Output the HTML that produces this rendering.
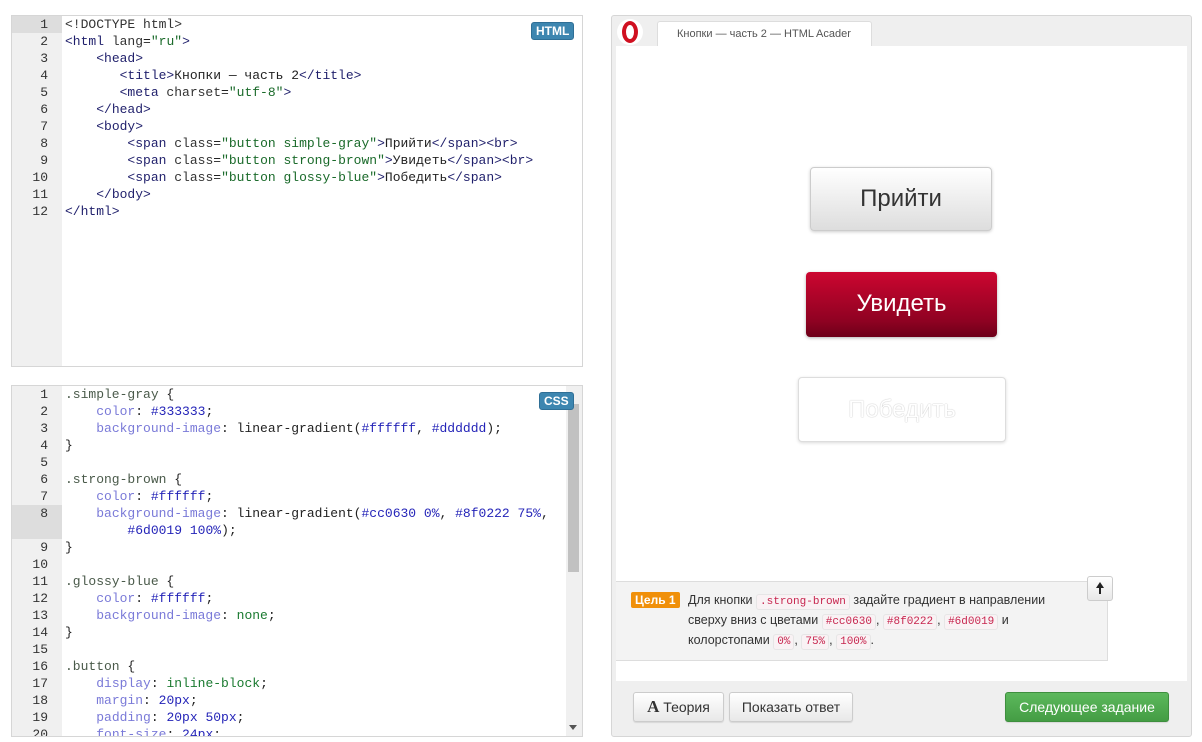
<!DOCTYPE html>
<html><head><meta charset="utf-8"><style>
*{box-sizing:border-box;margin:0;padding:0}
body{width:1202px;height:742px;background:#fff;font-family:"Liberation Sans",sans-serif;position:relative;overflow:hidden}
.panel{position:absolute;border:1px solid #d6d6d6;background:#fff;overflow:hidden}
.gut{position:absolute;left:0;top:0;bottom:0;width:50px;background:#f0f0f0}
.code{position:absolute;left:0;top:0;font-family:"Liberation Mono",monospace;font-size:13px;line-height:17px;white-space:pre;color:#222}
.ln{display:inline-block;width:36px;text-align:right;color:#333;margin-right:17px}
.t{color:#1f1f6b}.s{color:#1a6a2a}.a{color:#333}
.sel{color:#4a5a4a}.p{color:#7a7ad8}.h{color:#2424b8}.k{color:#1a7a30}.n{color:#2424b8}
.badge{position:absolute;background:#3d86b0;color:#fff;font-weight:bold;font-size:12px;padding:1px 4px;border-radius:3px;border:1px solid #2f6f96}
.btn{position:absolute;border-radius:4px;text-align:center;font-size:24px;font-family:"Liberation Sans",sans-serif}
code{font-family:"Liberation Mono",monospace;font-size:11px;color:#c7254e;background:#f9f2f4;border:1px solid #e6e6e6;border-radius:3px;padding:1px 3px}
.fb{position:absolute;top:676px;height:30px;border:1px solid #ccc;border-radius:3px;background:linear-gradient(#fff,#e8e8e8);font-size:14px;color:#333;line-height:28px;text-align:center;box-shadow:0 1px 1px rgba(0,0,0,.1)}
</style></head><body>

<div class="panel" style="left:11px;top:15px;width:572px;height:352px">
<div class="gut"></div>
<div style="position:absolute;left:0;top:0;width:50px;height:17px;background:#ddd"></div>
<div class="code"><span class="ln">1</span><span class="a">&lt;!DOCTYPE html&gt;</span>
<span class="ln">2</span><span class="t">&lt;html </span><span class="a">lang</span>=<span class="s">"ru"</span><span class="t">&gt;</span>
<span class="ln">3</span>    <span class="t">&lt;head&gt;</span>
<span class="ln">4</span>       <span class="t">&lt;title&gt;</span>Кнопки — часть 2<span class="t">&lt;/title&gt;</span>
<span class="ln">5</span>       <span class="t">&lt;meta </span><span class="a">charset</span>=<span class="s">"utf-8"</span><span class="t">&gt;</span>
<span class="ln">6</span>    <span class="t">&lt;/head&gt;</span>
<span class="ln">7</span>    <span class="t">&lt;body&gt;</span>
<span class="ln">8</span>        <span class="t">&lt;span </span><span class="a">class</span>=<span class="s">"button simple-gray"</span><span class="t">&gt;</span>Прийти<span class="t">&lt;/span&gt;&lt;br&gt;</span>
<span class="ln">9</span>        <span class="t">&lt;span </span><span class="a">class</span>=<span class="s">"button strong-brown"</span><span class="t">&gt;</span>Увидеть<span class="t">&lt;/span&gt;&lt;br&gt;</span>
<span class="ln">10</span>        <span class="t">&lt;span </span><span class="a">class</span>=<span class="s">"button glossy-blue"</span><span class="t">&gt;</span>Победить<span class="t">&lt;/span&gt;</span>
<span class="ln">11</span>    <span class="t">&lt;/body&gt;</span>
<span class="ln">12</span><span class="t">&lt;/html&gt;</span></div>
<div class="badge" style="left:519px;top:6px">HTML</div>
</div>

<div class="panel" style="left:11px;top:385px;width:572px;height:352px">
<div class="gut"></div>
<div style="position:absolute;left:0;top:119px;width:50px;height:34px;background:#ddd"></div>
<div class="code"><span class="ln">1</span><span class="sel">.simple-gray</span> {
<span class="ln">2</span>    <span class="p">color</span>: <span class="h">#333333</span>;
<span class="ln">3</span>    <span class="p">background-image</span>: linear-gradient(<span class="h">#ffffff</span>, <span class="h">#dddddd</span>);
<span class="ln">4</span>}
<span class="ln">5</span>
<span class="ln">6</span><span class="sel">.strong-brown</span> {
<span class="ln">7</span>    <span class="p">color</span>: <span class="h">#ffffff</span>;
<span class="ln">8</span>    <span class="p">background-image</span>: linear-gradient(<span class="h">#cc0630</span> <span class="n">0%</span>, <span class="h">#8f0222</span> <span class="n">75%</span>,
<span class="ln"></span>        <span class="h">#6d0019</span> <span class="n">100%</span>);
<span class="ln">9</span>}
<span class="ln">10</span>
<span class="ln">11</span><span class="sel">.glossy-blue</span> {
<span class="ln">12</span>    <span class="p">color</span>: <span class="h">#ffffff</span>;
<span class="ln">13</span>    <span class="p">background-image</span>: <span class="k">none</span>;
<span class="ln">14</span>}
<span class="ln">15</span>
<span class="ln">16</span><span class="sel">.button</span> {
<span class="ln">17</span>    <span class="p">display</span>: <span class="k">inline-block</span>;
<span class="ln">18</span>    <span class="p">margin</span>: <span class="n">20px</span>;
<span class="ln">19</span>    <span class="p">padding</span>: <span class="n">20px 50px</span>;
<span class="ln">20</span>    <span class="p">font-size</span>: <span class="n">24px</span>;</div>
<div style="position:absolute;right:0;top:0;width:16px;height:352px;background:#f0f0f0"></div>
<div style="position:absolute;right:3px;top:18px;width:11px;height:168px;background:#c1c1c1"></div>
<div style="position:absolute;right:5px;bottom:6px;width:0;height:0;border-left:4px solid transparent;border-right:4px solid transparent;border-top:5px solid #555"></div>
<div class="badge" style="left:527px;top:6px">CSS</div>
</div>

<div class="panel" style="left:611px;top:15px;width:581px;height:722px;background:#efefef;border-radius:3px">
<div style="position:absolute;left:5px;top:3px;width:26px;height:26px;border-radius:50%;background:#fff"></div>
<div style="position:absolute;left:10px;top:5px;width:16px;height:22px;border-radius:50%;border:4px solid #d01020"></div>
<div style="position:absolute;left:45px;top:5px;width:215px;height:27px;background:#fff;border:1px solid #ddd;border-bottom:none;border-radius:3px 3px 0 0;font-size:11px;color:#555;line-height:24px;padding-left:19px;white-space:nowrap;overflow:hidden">Кнопки — часть 2 — HTML Acader</div>
<div style="position:absolute;left:4px;top:30px;width:571px;height:635px;background:#fff"></div>
<div class="btn" style="left:198px;top:151px;width:182px;height:64px;border:1px solid #ccc;background:linear-gradient(#fff,#ddd);color:#333;line-height:62px;box-shadow:0 1px 3px rgba(0,0,0,.2)">Прийти</div>
<div class="btn" style="left:194px;top:256px;width:191px;height:65px;background:linear-gradient(#cc0630 0%,#8f0222 75%,#6d0019 100%);color:#fff;line-height:64px;box-shadow:0 1px 3px rgba(0,0,0,.3)">Увидеть</div>
<div class="btn" style="left:186px;top:361px;width:208px;height:65px;border:1px solid #ddd;background:#fff;color:#fff;line-height:63px;text-shadow:0 0 1px #999;box-shadow:0 1px 3px rgba(0,0,0,.15)">Победить</div>
<div style="position:absolute;left:4px;top:565px;width:492px;height:80px;background:#f3f3f3;border:1px solid #ddd;border-left:none"></div>
<div style="position:absolute;left:19px;top:576px;background:#f0900a;color:#fff;font-weight:bold;font-size:12px;padding:1px 4px;border-radius:2px">Цель 1</div>
<div style="position:absolute;left:76px;top:575px;width:390px;font-size:12.5px;line-height:18px;color:#333">Для кнопки <code>.strong-brown</code> задайте градиент в направлении сверху вниз с цветами <code>#cc0630</code>, <code>#8f0222</code>, <code>#6d0019</code> и колорстопами <code>0%</code>, <code>75%</code>, <code>100%</code>.</div>
<div style="position:absolute;left:475px;top:560px;width:26px;height:25px;border:1px solid #ccc;border-radius:3px;background:linear-gradient(#fff,#e8e8e8)"><div style="position:absolute;left:8px;top:5px;width:0;height:0;border-left:4px solid transparent;border-right:4px solid transparent;border-bottom:6px solid #222"></div><div style="position:absolute;left:11px;top:10px;width:2px;height:7px;background:#222"></div></div>
<div class="fb" style="left:21px;width:91px"><b style="font-family:'Liberation Serif',serif;font-size:17px">A</b> Теория</div>
<div class="fb" style="left:117px;width:124px">Показать ответ</div>
<div class="fb" style="left:393px;width:164px;background:linear-gradient(#5cb85c,#449d44);border-color:#3e8f3e;color:#fff">Следующее задание</div>
</div>
</body></html>
